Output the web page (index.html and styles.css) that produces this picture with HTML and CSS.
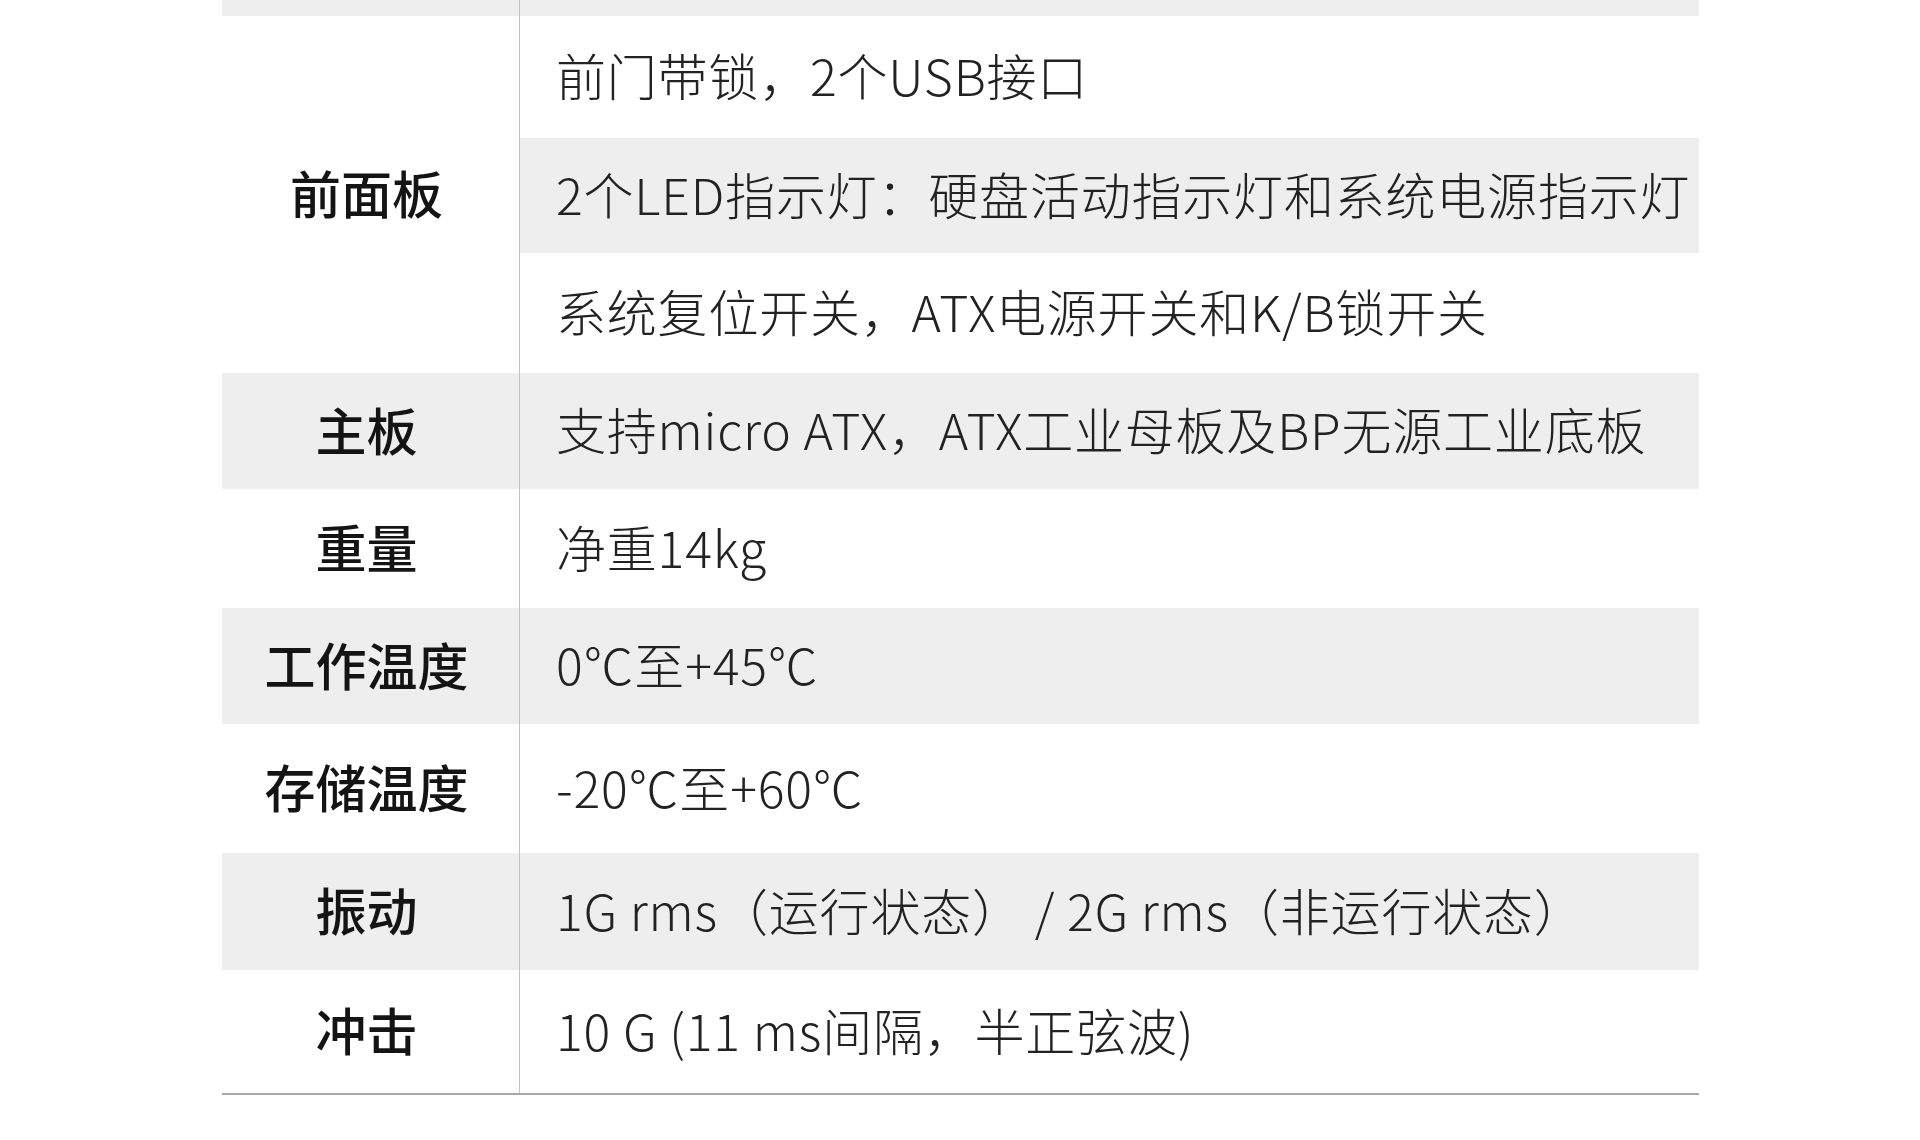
FILE: index.html
```html
<!DOCTYPE html>
<html lang="zh-CN">
<head>
<meta charset="utf-8">
<title>规格参数</title>
<link rel="stylesheet" href="styles.css">
</head>
<body>
<div class="spec">
  <div class="row shade tail"><div class="k"></div><div class="v"></div></div>
  <div class="row group">
    <div class="k">前面板</div>
    <div class="vals">
      <div class="v h1">前门带锁，2个USB接口</div>
      <div class="v h2 shade">2个LED指示灯：硬盘活动指示灯和系统电源指示灯</div>
      <div class="v h3">系统复位开关，ATX电源开关和K/B锁开关</div>
    </div>
  </div>
  <div class="row shade r1"><div class="k">主板</div><div class="v">支持micro ATX，ATX工业母板及BP无源工业底板</div></div>
  <div class="row r2"><div class="k">重量</div><div class="v">净重14kg</div></div>
  <div class="row shade r3"><div class="k">工作温度</div><div class="v">0℃至+45℃</div></div>
  <div class="row r4"><div class="k">存储温度</div><div class="v">-20℃至+60℃</div></div>
  <div class="row shade r5"><div class="k">振动</div><div class="v">1G rms（运行状态） / 2G rms（非运行状态）</div></div>
  <div class="row r6 last"><div class="k">冲击</div><div class="v">10 G (11 ms间隔，半正弦波)</div></div>
</div>
</body>
</html>
```
FILE: styles.css
```css
*, *::before, *::after { box-sizing: border-box; }
html, body {
  margin: 0;
  padding: 0;
  background: #ffffff;
}
body {
  width: 1920px;
  height: 1140px;
  overflow: hidden;
  font-family: "Noto Sans CJK SC", "Noto Sans", sans-serif;
}
.spec {
  margin-left: 222px;
  width: 1477px;
  display: flex;
  flex-direction: column;
}
.row {
  display: grid;
  grid-template-columns: 297px 1fr;
}
.k {
  display: flex;
  align-items: center;
  justify-content: center;
  padding-right: 8px;
  padding-bottom: 5px;
  font-size: 51px;
  font-weight: 500;
  color: #141414;
}
.v {
  display: flex;
  align-items: center;
  border-left: 1px solid #c2c2c2;
  padding-left: 36px;
  padding-bottom: 6px;
  font-size: 50px;
  font-weight: 300;
  letter-spacing: 0.8px;
  color: #222222;
  white-space: nowrap;
}
.shade { background: #eeeeee; }
.tail { height: 16px; }
.tail .k, .tail .v { padding-bottom: 0; }
.vals { display: flex; flex-direction: column; }
.h1 { height: 122px; }
.h2 { height: 115px; }
.h3 { height: 120px; }
.r1 { height: 116px; }
.r2 { height: 119px; }
.r3 { height: 116px; }
.r4 { height: 129px; }
.r5 { height: 117px; }
.r6 { height: 125px; }
.last { border-bottom: 2px solid #a9a9a9; }
```
